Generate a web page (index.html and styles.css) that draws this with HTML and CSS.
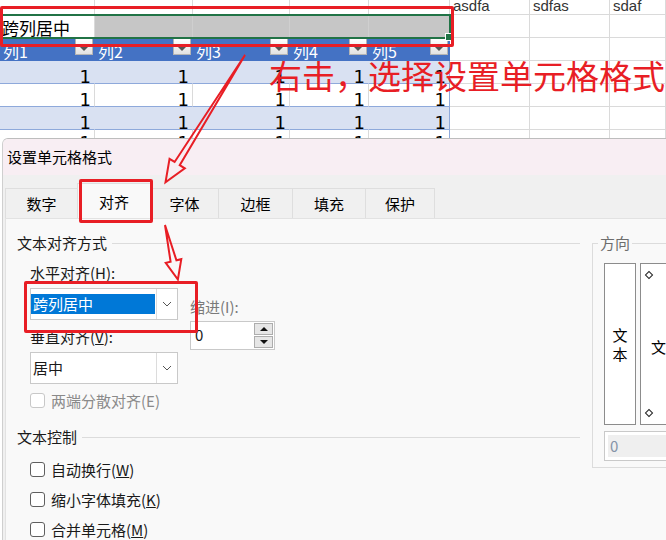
FILE: index.html
```html
<!DOCTYPE html>
<html lang="zh-CN">
<head>
    <meta charset="UTF-8">
    <title>设置单元格格式</title>
    <link rel="stylesheet" href="styles.css">
</head>
<body>
<div class="screen">
    <div class="sheet">
        <div class="row first">
            <div class="c ca"></div><div class="c cb"></div><div class="c cc"></div><div class="c cd"></div><div class="c ce"></div>
            <div class="c cf">asdfa</div><div class="c cg">sdfas</div><div class="c ch">sdaf</div>
        </div>
        <div class="row merged">
            <div class="c ca label-cell">跨列居中</div>
            <div class="c cb fill"></div><div class="c cc fill"></div><div class="c cd fill"></div><div class="c ce fill"></div>
            <div class="c cf"></div><div class="c cg"></div><div class="c ch"></div>
        </div>
        <div class="row head">
            <div class="c ca t">列1<span class="fbtn"></span></div>
            <div class="c cb t">列2<span class="fbtn"></span></div>
            <div class="c cc t">列3<span class="fbtn"></span></div>
            <div class="c cd t">列4<span class="fbtn"></span></div>
            <div class="c ce t">列5<span class="fbtn"></span></div>
            <div class="c cf"></div><div class="c cg"></div><div class="c ch"></div>
        </div>
        <div class="row data band">
            <div class="c ca t">1</div><div class="c cb t">1</div><div class="c cc t">1</div><div class="c cd t">1</div><div class="c ce t">1</div>
            <div class="c cf"></div><div class="c cg"></div><div class="c ch"></div>
        </div>
        <div class="row data">
            <div class="c ca t">1</div><div class="c cb t">1</div><div class="c cc t">1</div><div class="c cd t">1</div><div class="c ce t">1</div>
            <div class="c cf"></div><div class="c cg"></div><div class="c ch"></div>
        </div>
        <div class="row data band">
            <div class="c ca t">1</div><div class="c cb t">1</div><div class="c cc t">1</div><div class="c cd t">1</div><div class="c ce t">1</div>
            <div class="c cf"></div><div class="c cg"></div><div class="c ch"></div>
        </div>
        <div class="row data last">
            <div class="c ca t">1</div><div class="c cb t">1</div><div class="c cc t">1</div><div class="c cd t">1</div><div class="c ce t">1</div>
            <div class="c cf"></div><div class="c cg"></div><div class="c ch"></div>
        </div>
    </div>

    <div class="dialog">
        <div class="dlg-title">设置单元格格式</div>
        <div class="tabs">
            <div class="tab w1">数字</div>
            <div class="tab w2 active">对齐</div>
            <div class="tab w3">字体</div>
            <div class="tab w4">边框</div>
            <div class="tab w5">填充</div>
            <div class="tab w6">保护</div>
        </div>
        <div class="panel">
            <div class="panel-left">
                <div class="group-head">文本对齐方式</div>
                <div class="align-row">
                    <div class="align-col">
                        <div class="lbl first-lbl">水平对齐(H):</div>
                        <div class="select">
                            <span class="sel-val picked">跨列居中</span>
                            <span class="sel-btn"><svg width="10" height="6" viewBox="0 0 10 6"><polyline points="1,1 5,5 9,1" fill="none" stroke="#555" stroke-width="1"/></svg></span>
                        </div>
                        <div class="lbl">垂直对齐(<u>V</u>):</div>
                        <div class="select">
                            <span class="sel-val">居中</span>
                            <span class="sel-btn"><svg width="10" height="6" viewBox="0 0 10 6"><polyline points="1,1 5,5 9,1" fill="none" stroke="#555" stroke-width="1"/></svg></span>
                        </div>
                        <div class="check off"><span class="box"></span><span>两端分散对齐(E)</span></div>
                    </div>
                    <div class="indent-col">
                        <div class="lbl dim">缩进(I):</div>
                        <div class="spin">
                            <span class="spin-val">0</span>
                            <span class="spin-btns"><span class="up"></span><span class="down"></span></span>
                        </div>
                    </div>
                </div>
                <div class="group-head second">文本控制</div>
                <div class="checks">
                    <div class="check"><span class="box"></span><span>自动换行(<u>W</u>)</span></div>
                    <div class="check"><span class="box"></span><span>缩小字体填充(<u>K</u>)</span></div>
                    <div class="check"><span class="box"></span><span>合并单元格(<u>M</u>)</span></div>
                </div>
            </div>
            <fieldset class="orient">
                <legend>方向</legend>
                <div class="orient-boxes">
                    <div class="vtext">文<br>本</div>
                    <div class="dial">
                        <span class="dot"></span>
                        <span class="dial-text">文本</span>
                        <span class="dot"></span>
                    </div>
                </div>
                <div class="deg"><span>0</span></div>
            </fieldset>
        </div>
    </div>

    <!-- annotations over the screenshot -->
    <div class="cursor"></div>
    <div class="mark mark-cell"></div>
    <div class="mark mark-tab"></div>
    <div class="mark mark-sel"></div>
    <div class="note">右击，选择设置单元格格式</div>
    <svg class="arrows" width="666" height="540">
        <polygon transform="translate(245,55) rotate(122)" points="0,0 128,-3 128,-9 150,0 128,9 128,3" fill="none" stroke="#e81e25" stroke-width="2" stroke-linejoin="miter"/>
        <polygon transform="translate(165,225) rotate(76.7)" points="0,0 37,-3 37,-8 56,0 37,8 37,3" fill="none" stroke="#e81e25" stroke-width="2" stroke-linejoin="miter"/>
    </svg>
</div>
</body>
</html>
```

FILE: styles.css
```css
* {
    box-sizing: border-box;
}
body {
    margin: 0;
    background: #fff;
    font-family: "Noto Sans CJK SC", sans-serif;
    color: #1a1a1a;
}
.screen {
    position: relative;
    width: 666px;
    height: 540px;
    overflow: hidden;
}

/* sheet */
.sheet {
    height: 138px;
    overflow: hidden;
}
.row {
    display: flex;
    height: 23px;
}
.row.first {
    height: 15px;
}
.c {
    flex: none;
    height: 100%;
    border-right: 1px solid #dadada;
    border-bottom: 1px solid #dadada;
    overflow: hidden;
    white-space: nowrap;
}
.ca { width: 95px; }
.cb { width: 98px; }
.cc { width: 97px; }
.cd { width: 79px; }
.ce { width: 81px; }
.cf { width: 80px; }
.cg { width: 80px; }
.ch { flex: 1; }

.first .c {
    font-family: "Liberation Sans", sans-serif;
    font-size: 15px;
    line-height: 12px;
    padding-left: 3px;
    color: #333;
}
.label-cell {
    font-size: 17px;
    line-height: 23px;
    padding: 1px 0 0 2px;
    color: #000;
}
.fill {
    background: #c6c6c6;
    border-right-color: #cfcfcf;
}

.head .t {
    display: flex;
    justify-content: space-between;
    align-items: flex-start;
    background: #4472c4;
    color: #fff;
    font-size: 16px;
    line-height: 23px;
    padding: 2px 0 0 3px;
    border-right: none;
    border-bottom-color: #4472c4;
}
.fbtn {
    position: relative;
    flex: none;
    width: 18px;
    height: 17px;
    margin: -2px 2px 0 0;
    background: linear-gradient(#fff, #e2e2e2);
    border: 1px solid #b4b4b4;
}
.fbtn::before {
    content: "";
    position: absolute;
    left: 4px;
    top: 8px;
    border-left: 4px solid transparent;
    border-right: 4px solid transparent;
    border-top: 4px solid #555;
}

.data .t {
    text-align: right;
    padding: 4px 3px 0 0;
    font-family: "DejaVu Sans", sans-serif;
    font-size: 18px;
    line-height: 23px;
    color: #000;
    border-bottom-color: #8ea9db;
}
.data.last .t {
    padding-top: 1px;
}
.band .t {
    background: #d9e1f2;
    border-right-color: #d9e1f2;
}
.data .ce {
    border-right-color: #8ea9db;
}

/* dialog */
.dialog {
    margin-left: 2px;
    border-top: 1px solid #bdbdbd;
    border-left: 1px solid #cfcfcf;
    border-top-left-radius: 6px;
    background: #f0f0f0;
    height: 402px;
    overflow: hidden;
}
.dlg-title {
    height: 36px;
    line-height: 36px;
    padding-left: 4px;
    font-size: 15px;
    background: #f8eef3;
    color: #000;
}
.tabs {
    display: flex;
    align-items: flex-end;
    height: 43px;
    padding-left: 2px;
}
.tab {
    height: 30px;
    line-height: 29px;
    text-align: center;
    font-size: 15px;
    color: #000;
    border: 1px solid #dedede;
    border-bottom: none;
    margin-right: -1px;
}
.tab.active {
    height: 35px;
    line-height: 36px;
    background: #f9f9f9;
}
.w1 { width: 73px; }
.w2 { width: 74px; }
.w3 { width: 69px; }
.w4 { width: 75px; }
.w5 { width: 74px; }
.w6 { width: 70px; }

.panel {
    display: flex;
    align-items: flex-start;
    margin-left: 2px;
    height: 322px;
    padding: 16px 0 0 11px;
    background: #f9f9f9;
    border-top: 1px solid #e2e2e2;
    border-left: 1px solid #e2e2e2;
    font-size: 15px;
}
.panel-left {
    width: 563px;
    flex: none;
}
.group-head {
    display: flex;
    align-items: center;
    gap: 5px;
    height: 16px;
    line-height: 16px;
    white-space: nowrap;
}
.group-head::after {
    content: "";
    flex: 1;
    border-top: 1px solid #dcdcdc;
}
.group-head.second {
    margin-top: 14px;
}

.align-row {
    display: flex;
    padding-left: 13px;
}
.align-col {
    width: 148px;
}
.lbl {
    height: 16px;
    line-height: 16px;
    margin-top: 9px;
    white-space: nowrap;
}
.lbl.first-lbl {
    margin-top: 14px;
}
.lbl.dim {
    color: #7a7a7a;
    margin-top: 48px;
}
.select {
    display: flex;
    height: 32px;
    margin-top: 7px;
    background: #fff;
    border: 1px solid #c9c9c9;
}
.sel-val {
    flex: 1;
    height: 20px;
    margin: 5px 1px 0 0;
    padding-left: 2px;
    line-height: 20px;
}
.sel-val.picked {
    background: #0078d7;
    color: #fff;
}
.sel-btn {
    width: 21px;
    display: flex;
    align-items: center;
    justify-content: center;
    border-left: 1px solid #dcdcdc;
}

.indent-col {
    margin-left: 12px;
}
.spin {
    display: flex;
    width: 85px;
    height: 29px;
    margin-top: 6px;
    background: #fff;
    border: 1px solid #c9c9c9;
}
.spin-val {
    flex: 1;
    padding: 2px 0 0 4px;
    line-height: 22px;
}
.spin-btns {
    display: flex;
    flex-direction: column;
    gap: 1px;
    margin: 1px 1px 0 0;
}
.spin-btns span {
    position: relative;
    width: 19px;
    height: 12px;
    background: #e6e6e6;
    border: 1px solid #adadad;
}
.spin-btns span::before {
    content: "";
    position: absolute;
    left: 5px;
    top: 3px;
    border-left: 4px solid transparent;
    border-right: 4px solid transparent;
}
.spin-btns .up::before {
    border-bottom: 4px solid #111;
}
.spin-btns .down::before {
    border-top: 4px solid #111;
}

.check {
    display: flex;
    align-items: center;
    gap: 6px;
    height: 30px;
    white-space: nowrap;
}
.box {
    flex: none;
    width: 15px;
    height: 15px;
    background: #fff;
    border: 1px solid #5f5f5f;
    border-radius: 3px;
}
.check.off {
    margin-top: 1px;
    color: #8a8a8a;
}
.check.off .box {
    border-color: #c8c8c8;
}
.checks {
    margin-top: 9px;
    padding-left: 13px;
}

.orient {
    flex: none;
    width: 160px;
    margin: 0 0 0 12px;
    padding: 12px 0 6px 11px;
    border: 1px solid #dcdcdc;
    min-width: 0;
}
.orient legend {
    margin-left: -6px;
    padding: 0 2px;
    line-height: 16px;
    color: #6d6d6d;
}
.orient-boxes {
    display: flex;
    gap: 4px;
}
.vtext {
    flex: none;
    width: 32px;
    height: 162px;
    display: flex;
    align-items: center;
    justify-content: center;
    text-align: center;
    line-height: 19px;
    background: #fff;
    border: 1px solid #8c8c8c;
    color: #000;
}
.dial {
    flex: none;
    display: flex;
    flex-direction: column;
    justify-content: space-between;
    width: 110px;
    height: 162px;
    padding: 8px 0 8px 5px;
    background: #fff;
    border: 1px solid #8c8c8c;
    color: #000;
}
.dot {
    width: 6px;
    height: 6px;
    border: 1px solid #222;
    transform: rotate(45deg);
}
.dial-text {
    padding-left: 5px;
    margin-top: 4px;
}
.deg {
    width: 130px;
    height: 30px;
    margin-top: 6px;
    padding: 3px;
    background: #fff;
    border: 1px solid #c9c9c9;
}
.deg span {
    display: block;
    height: 22px;
    line-height: 22px;
    padding-left: 2px;
    background: #efefef;
    color: #8594a8;
}

/* annotations */
.cursor {
    position: absolute;
    left: -3px;
    top: 14px;
    width: 454px;
    height: 25px;
    border: 2px solid #217346;
}
.cursor::after {
    content: "";
    position: absolute;
    right: -4px;
    bottom: -4px;
    width: 6px;
    height: 6px;
    background: #217346;
    border: 1px solid #fff;
}
.mark {
    position: absolute;
    border: 3px solid #e81e25;
    border-radius: 2px;
}
.mark-cell {
    left: 0;
    top: 6px;
    width: 454px;
    height: 41px;
}
.mark-tab {
    left: 79px;
    top: 179px;
    width: 74px;
    height: 44px;
}
.mark-sel {
    left: 24px;
    top: 281px;
    width: 174px;
    height: 52px;
}
.note {
    position: absolute;
    left: 269px;
    top: 56px;
    font-size: 33px;
    line-height: 38px;
    color: #e81e25;
    white-space: nowrap;
}
.arrows {
    position: absolute;
    left: 0;
    top: 0;
    pointer-events: none;
}
```
